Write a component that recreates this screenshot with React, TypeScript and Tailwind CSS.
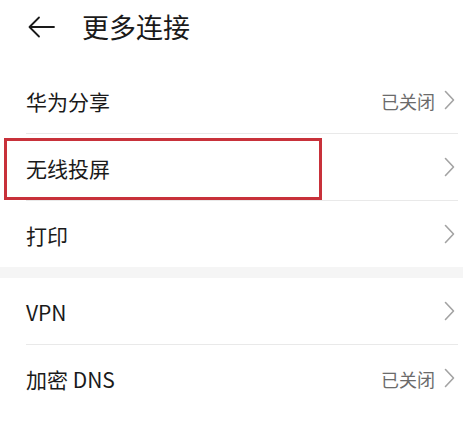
import React from 'react';

const font = { fontFamily: '"Noto Sans CJK SC", "Noto Sans", sans-serif' };

function Chevron() {
  return (
    <svg width="11" height="20" viewBox="0 0 11 20" fill="none" stroke="#a3a3a3" strokeWidth="1.6" strokeLinecap="round" strokeLinejoin="round">
      <path d="M1.5 1.5 9.5 10 1.5 18.5" />
    </svg>
  );
}

function Row({ label, value, divider = true, boxed = false }: { label: string; value?: string; divider?: boolean; boxed?: boolean }) {
  return (
    <div className="relative">
      <div className="h-[66px] flex items-center pl-[26px] pr-[8px]">
        <span className="flex-1 text-[21px] text-[#1a1a1a] pt-[3px]">{label}</span>
        {value && <span className="text-[18px] text-[#6b6b6b] mr-[9px] pt-[3px]">{value}</span>}
        <Chevron />
      </div>
      {divider && <div className="ml-[26px] mr-[5px] h-px bg-[#e9e9e9]" />}
      {boxed && <div className="absolute left-[4px] top-[4px] w-[318px] h-[62px] border-[3px] border-[#c8313a]" />}
    </div>
  );
}

export default function App() {
  return (
    <div className="w-[463px] h-[435px] bg-white overflow-hidden" style={font}>
      <div className="h-[67px] pb-[14px] flex items-center pl-[28px]">
        <svg width="27" height="22" viewBox="0 0 27 22" fill="none" stroke="#1a1a1a" strokeWidth="1.8" strokeLinecap="round" strokeLinejoin="round">
          <path d="M26 11H2" />
          <path d="M11 1.5 1.5 11 11 20.5" />
        </svg>
        <span className="ml-[27px] text-[27px] text-[#1a1a1a] leading-none">更多连接</span>
      </div>
      <Row label="华为分享" value="已关闭" />
      <Row label="无线投屏" boxed />
      <Row label="打印" divider={false} />
      <div className="h-[11px] bg-[#f5f5f5]" />
      <Row label="VPN" />
      <Row label="加密 DNS" value="已关闭" divider={false} />
    </div>
  );
}
